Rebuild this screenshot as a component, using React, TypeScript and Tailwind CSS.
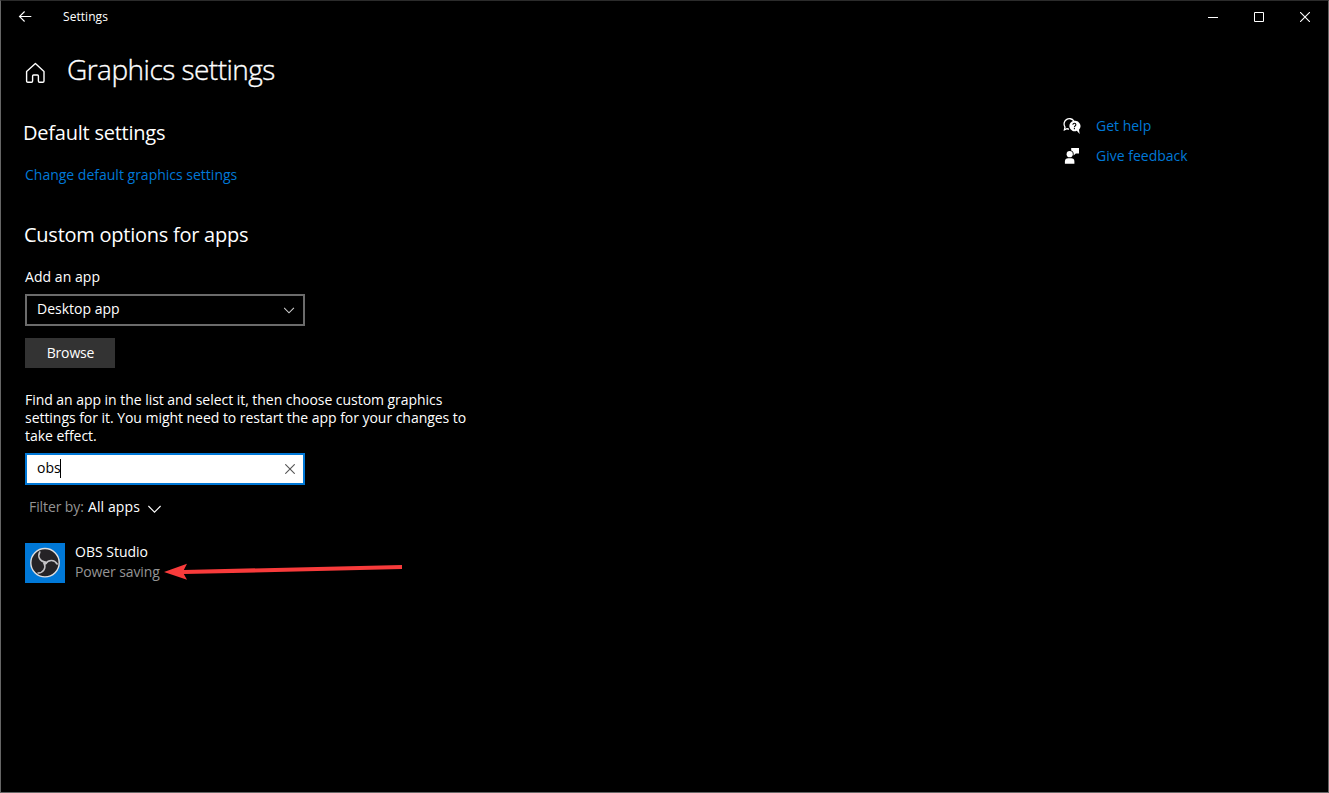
import type { ReactNode } from "react";

function Link({ children }: { children: ReactNode }) {
  return (
    <a href="#" className="whitespace-nowrap text-[#0078d7]">
      {children}
    </a>
  );
}

function BackIcon() {
  return (
    <svg width="14" height="12" viewBox="0 0 14 12" fill="none" stroke="#fff" strokeWidth="1.1">
      <path d="M13.300 5.500H1.500M6.600.500L1.500 5.500l5.100 5" />
    </svg>
  );
}

function HomeIcon() {
  return (
    <svg width="20" height="22" viewBox="0 0 20 22" fill="none" stroke="#fff" strokeWidth="1.4" strokeLinejoin="round">
      <path d="M1.6 9.400L10.400 1.600l8.600 7.800V19c0 .8-.5 1.200-1.200 1.200h-3.200c-.8 0-1.200-.4-1.200-1.200v-5c0-.7-.4-1-1-1H8.600c-.6 0-1 .3-1 1v5c0 .8-.4 1.200-1.200 1.200H2.800c-.7 0-1.200-.4-1.200-1.200z" />
    </svg>
  );
}

function WindowButtons() {
  return (
    <div className="flex">
      <button className="flex h-8 w-[46px] items-center justify-center" aria-label="Minimize">
        <svg width="10" height="10" viewBox="0 0 10 10" shapeRendering="crispEdges">
          <path d="M0 5h10v1H0z" fill="#fff" />
        </svg>
      </button>
      <button className="flex h-8 w-[46px] items-center justify-center" aria-label="Maximize">
        <svg width="10" height="10" viewBox="0 0 10 10" fill="none" stroke="#fff">
          <path d="M.5.5h9v9h-9z" />
        </svg>
      </button>
      <button className="flex h-8 w-[46px] items-center justify-center" aria-label="Close">
        <svg width="10" height="10" viewBox="0 0 10 10" stroke="#fff" strokeWidth="1.1">
          <path d="M0 0l10 10M10 0L0 10" />
        </svg>
      </button>
    </div>
  );
}

function HelpIcon() {
  return (
    <svg width="18" height="18" viewBox="0 0 18 18" fill="none">
      <path d="M6 12.200c-.8 0-1.500-.2-2.100-.5L1.400 12.800l.6-2.600A4.900 4.900 0 1 1 10.900 4" stroke="#fff" strokeWidth="1.300" />
      <path d="M11.500 3.800a5.200 5.200 0 1 0 2.300 9.900L16.700 16.900l-.7-4.200a5.300 5.300 0 0 0-4.500-8.900z" fill="#fff" />
      <path d="M9.900 7.700c0-1.900 3-1.800 3 0 0 1.200-1.500 1.200-1.500 2.500M11.400 11.100v1.200" stroke="#000" strokeWidth="1.100" />
    </svg>
  );
}

function FeedbackIcon() {
  return (
    <svg width="18" height="18" viewBox="0 0 18 18" fill="#fff">
      <circle cx="6.700" cy="7.200" r="3.100" />
      <path d="M1.900 16.800v-2.300c0-2 1.300-3.200 3.200-3.200h3.200c1.900 0 3.100 1.200 3.100 3.200v2.300z" />
      <path d="M8.200 1h7.800v5.600h-3.200l-2.200 2V6.500c0-1.400-.9-2.700-2.400-3.100z" />
    </svg>
  );
}

function ObsIcon() {
  const blade = "M-5.200-11C-7.800-6.200-4.800-1.400 0-.9";
  return (
    <svg width="40" height="40" viewBox="-20 -20 40 40" fill="none">
      <circle cy="-.3" r="14.200" fill="#252326" stroke="#dedee0" strokeWidth="1.400" />
      <g stroke="#c4c3c6" strokeWidth="1.600" strokeLinecap="round">
        <path d={blade} />
        <path d={blade} transform="rotate(120)" />
        <path d={blade} transform="rotate(240)" />
      </g>
      <circle r="1.800" fill="#c4c3c6" />
    </svg>
  );
}

export default function App() {
  return (
    <div className="relative flex h-[793px] w-[1329px] flex-col overflow-hidden border border-[#666] border-t-[#2b2b2b] bg-black font-['Open_Sans','Noto_Sans',sans-serif] text-[14px] leading-[18px] text-white">
      <header className="flex h-8 shrink-0 justify-between">
        <div className="flex pl-[17px]">
          <div className="flex h-8 w-[45px] items-center">
            <BackIcon />
          </div>
          <span className="pt-[8px] text-[12px] leading-[16px] tracking-[0.05px]">Settings</span>
        </div>
        <WindowButtons />
      </header>

      <div className="mt-[18px] flex h-9 shrink-0 pl-[24px]">
        <div className="w-[42px] pt-[11px]">
          <HomeIcon />
        </div>
        <h1 className="text-[28px] leading-[36px] font-light tracking-[-0.52px] whitespace-nowrap [-webkit-text-stroke:0.35px_white]">
          Graphics settings
        </h1>
      </div>

      <div className="flex pl-[24px]">
        <main className="flex w-[1038px] flex-col items-start pt-[32px]">
          <h2 className="ml-[-2px] text-[20px] leading-[28px] tracking-[-0.23px]">Default settings</h2>
          <div className="mt-[19px] flex">
            <Link>Change default graphics settings</Link>
          </div>

          <h2 className="mt-[37px] ml-[-1px] text-[20px] leading-[28px] tracking-[-0.25px]">Custom options for apps</h2>
          <label className="mt-[19px] tracking-[0.05px]">Add an app</label>
          <div className="mt-2 flex h-8 w-[280px] items-center justify-between border-2 border-[#6b6b6b] pr-[8px] pl-[10px]">
            <span className="mb-[2px]">Desktop app</span>
            <svg width="11" height="7" viewBox="0.5 0 11 7" fill="none" stroke="#ccc" strokeWidth="1.1">
              <path d="M.6.8l4.900 5 4.900-5" />
            </svg>
          </div>
          <button className="mt-3 flex h-[30px] w-[90px] justify-center bg-[#333] pt-[6px] pl-px tracking-[-0.15px]">Browse</button>

          <p className="mt-[23px] tracking-[-0.04px] whitespace-nowrap">
            Find an app in the list and select it, then choose custom graphics
            <br />
            settings for it. You might need to restart the app for your changes to
            <br />
            take effect.
          </p>
          <div className="mt-2 flex h-8 w-[280px] items-center justify-between border-2 border-[#0078d7] bg-white pr-[8px] pl-[10px] text-black">
            <div className="mb-[2px] flex items-center">
              <span className="w-[23px]">obs</span>
              <span className="h-[19px] w-px bg-black" />
            </div>
            <svg width="10" height="10" viewBox="0 0 10 10" stroke="#555" strokeWidth="1.1">
              <path d="M.3.300l9.400 9.400M9.700.300L.3 9.700" />
            </svg>
          </div>

          <div className="mt-[13px] flex pl-[4px]">
            <span className="w-[59px] tracking-[-0.1px] text-[#949494]">Filter by:</span>
            <span className="w-[60px] tracking-[0.1px]">All apps</span>
            <svg className="mt-[7px]" width="13" height="9" viewBox="0 0 13 9" fill="none" stroke="#fff" strokeWidth="1.1">
              <path d="M.4 1l6.100 6.200L12.600 1" />
            </svg>
          </div>

          <div className="mt-[27px] flex gap-[10px]">
            <div className="h-10 w-10 bg-[#0078d7]">
              <ObsIcon />
            </div>
            <div className="flex flex-col gap-[2px] whitespace-nowrap">
              <span>OBS Studio</span>
              <span className="tracking-[-0.12px] text-[#949494]">Power saving</span>
            </div>
          </div>
        </main>

        <aside className="flex flex-col gap-3 pt-[30px]">
          <div className="flex gap-[15px]">
            <HelpIcon />
            <Link>Get help</Link>
          </div>
          <div className="flex gap-[15px]">
            <FeedbackIcon />
            <Link>Give feedback</Link>
          </div>
        </aside>
      </div>

      <svg className="absolute top-[559px] left-[159px]" width="250" height="24" viewBox="160 560 250 24">
        <path d="M164 572l23-8.200-3.200 6.200L402 565v4.100l-218.200 5 3.200 5.700z" fill="#f83b3b" />
      </svg>
    </div>
  );
}
